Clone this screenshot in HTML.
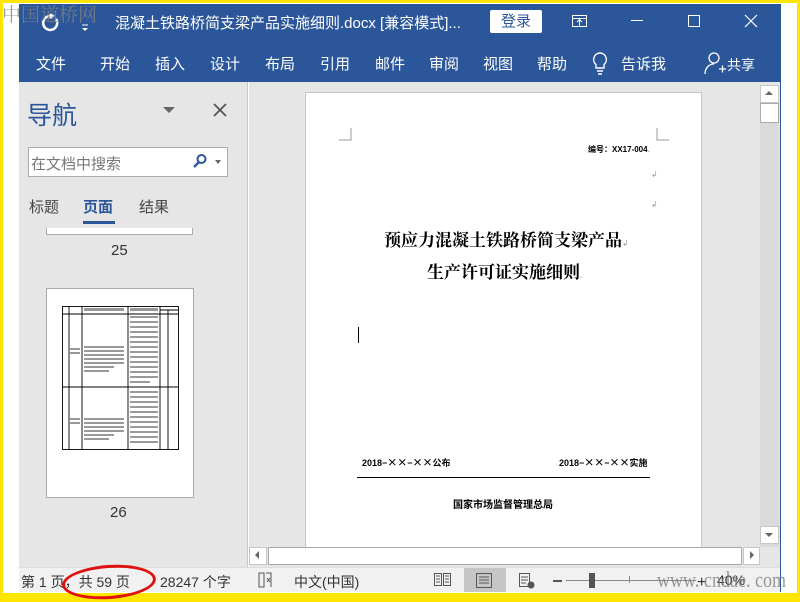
<!DOCTYPE html>
<html><head><meta charset="utf-8"><style>
*{margin:0;padding:0;box-sizing:border-box}
body{width:800px;height:600px;overflow:hidden;background:#ffe600;position:relative;font-family:"Liberation Sans","Noto Sans CJK SC",sans-serif}
.a{position:absolute}
.w{color:#fff;font-size:15px;white-space:nowrap}
.sr{font-family:"Liberation Serif","Noto Serif CJK SC",serif}
</style></head><body>
<div class="a" style="left:3px;top:3px;width:794px;height:590px;background:#fff"></div>
<!-- title bar -->
<div class="a" style="left:19px;top:4px;width:762px;height:78px;background:#2b579a"></div>
<svg class="a" style="left:38px;top:10px" width="60" height="24"><path d="M13 6 A7 7 0 1 0 18 9" stroke="#fff" stroke-width="2.5" fill="none"/><path d="M12 3 L17 6 L12 9Z" fill="#fff"/><path d="M44 15h6" stroke="#fff"/><path d="M44 18l3 3 3-3z" fill="#fff"/></svg>
<div class="a w" style="left:115px;top:12px;font-size:15px">混凝土铁路桥简支梁产品实施细则.docx [兼容模式]...</div>
<div class="a" style="left:490px;top:10px;width:52px;height:23px;background:#fff;border-radius:2px;color:#2b579a;font-size:15px;text-align:center;line-height:23px">登录</div>
<svg class="a" style="left:570px;top:12px" width="140" height="20"><rect x="2.5" y="3.5" width="14" height="11" fill="none" stroke="#fff"/><path d="M2.5 6.5h14M9.5 14V8M7 10l2.5-2.5L12 10" stroke="#fff" fill="none"/><path d="M61 8.5h12" stroke="#fff"/><rect x="118.5" y="3.5" width="11" height="11" fill="none" stroke="#fff"/></svg>
<svg class="a" style="left:744px;top:14px" width="14" height="14"><path d="M1 1L13 13M13 1L1 13" stroke="#fff" stroke-width="1.2"/></svg>
<!-- tabs -->
<div class="a w" style="left:36px;top:53px">文件</div>
<div class="a w" style="left:100px;top:53px">开始</div>
<div class="a w" style="left:155px;top:53px">插入</div>
<div class="a w" style="left:210px;top:53px">设计</div>
<div class="a w" style="left:265px;top:53px">布局</div>
<div class="a w" style="left:320px;top:53px">引用</div>
<div class="a w" style="left:375px;top:53px">邮件</div>
<div class="a w" style="left:429px;top:53px">审阅</div>
<div class="a w" style="left:483px;top:53px">视图</div>
<div class="a w" style="left:537px;top:53px">帮助</div>
<svg class="a" style="left:590px;top:51px" width="20" height="26"><path d="M10 2a6.5 6.5 0 0 0-4 11.5V17h8v-3.5A6.5 6.5 0 0 0 10 2z" fill="none" stroke="#fff" stroke-width="1.4"/><path d="M7 20h6M8 23h4" stroke="#fff" stroke-width="1.4"/></svg>
<div class="a w" style="left:621px;top:53px">告诉我</div>
<svg class="a" style="left:703px;top:50px" width="24" height="28"><circle cx="11" cy="8" r="5" fill="none" stroke="#fff" stroke-width="1.3"/><path d="M2 24c0-6 4-10 9-10" fill="none" stroke="#fff" stroke-width="1.3"/><path d="M16 19h7M19.5 15.5v7" stroke="#fff" stroke-width="1.3"/></svg>
<div class="a w" style="left:727px;top:55px;font-size:14px">共享</div>
<!-- nav pane -->
<div class="a" style="left:19px;top:82px;width:229px;height:486px;background:#e6e6e6;border-right:1px solid #c8c8c8"></div>
<div class="a" style="left:27px;top:96px;font-size:25px;color:#2b579a">导航</div>
<div class="a" style="left:163px;top:107px;width:0;height:0;border-left:6px solid transparent;border-right:6px solid transparent;border-top:6px solid #666"></div>
<svg class="a" style="left:213px;top:103px" width="14" height="14"><path d="M1 1L13 13M13 1L1 13" stroke="#555" stroke-width="1.8"/></svg>
<div class="a" style="left:28px;top:147px;width:200px;height:30px;background:#fff;border:1px solid #ababab"></div>
<div class="a" style="left:31px;top:153px;font-size:15px;color:#777">在文档中搜索</div>
<svg class="a" style="left:192px;top:153px" width="16" height="16"><circle cx="9.5" cy="6" r="4" fill="none" stroke="#2b579a" stroke-width="2"/><path d="M7 9L2 14" stroke="#2b579a" stroke-width="2.4"/></svg>
<div class="a" style="left:215px;top:160px;border-left:3.5px solid transparent;border-right:3.5px solid transparent;border-top:4px solid #666"></div>
<div class="a" style="left:29px;top:196px;font-size:15px;color:#444">标题</div>
<div class="a" style="left:83px;top:196px;font-size:15px;color:#2b579a;font-weight:bold">页面</div>
<div class="a" style="left:139px;top:196px;font-size:15px;color:#444">结果</div>
<div class="a" style="left:83px;top:221px;width:32px;height:3px;background:#2b579a"></div>
<div class="a" style="left:46px;top:228px;width:147px;height:7px;background:#fff;border:1px solid #aaa;border-top:none"></div>
<div class="a" style="left:111px;top:242px;font-size:15px;color:#333">25</div>
<div class="a" style="left:46px;top:288px;width:148px;height:210px;background:#fff;border:1px solid #aaa"></div>
<svg class="a" style="left:46px;top:288px" width="148" height="210">
<g stroke="#000" fill="none" stroke-width="0.9"><rect x="16.5" y="18.5" width="116" height="143"/><path d="M23 18v143M36 18v143M82 18v143M114 18v143M122 22v139M16 26h116M16 99h116M114 22h18"/></g>
<g fill="#999"><rect x="38" y="58" width="40" height="2"/><rect x="38" y="62" width="40" height="2"/><rect x="38" y="66" width="40" height="2"/><rect x="38" y="70" width="40" height="2"/><rect x="38" y="74" width="40" height="2"/><rect x="38" y="78" width="30" height="2"/><rect x="38" y="82" width="25" height="2"/><rect x="84" y="28" width="28" height="2"/><rect x="84" y="33" width="28" height="2"/><rect x="84" y="38" width="28" height="2"/><rect x="84" y="43" width="28" height="2"/><rect x="84" y="48" width="28" height="2"/><rect x="84" y="53" width="28" height="2"/><rect x="84" y="58" width="28" height="2"/><rect x="84" y="63" width="28" height="2"/><rect x="84" y="68" width="28" height="2"/><rect x="84" y="73" width="28" height="2"/><rect x="84" y="78" width="28" height="2"/><rect x="84" y="83" width="28" height="2"/><rect x="84" y="88" width="28" height="2"/><rect x="84" y="93" width="20" height="2"/><rect x="24" y="60" width="10" height="2"/><rect x="24" y="64" width="10" height="2"/><rect x="38" y="130" width="40" height="2"/><rect x="38" y="134" width="40" height="2"/><rect x="38" y="138" width="40" height="2"/><rect x="38" y="142" width="40" height="2"/><rect x="38" y="146" width="30" height="2"/><rect x="38" y="150" width="25" height="2"/><rect x="84" y="103" width="28" height="2"/><rect x="84" y="108" width="28" height="2"/><rect x="84" y="113" width="28" height="2"/><rect x="84" y="118" width="28" height="2"/><rect x="84" y="123" width="28" height="2"/><rect x="84" y="128" width="28" height="2"/><rect x="84" y="133" width="28" height="2"/><rect x="84" y="138" width="28" height="2"/><rect x="84" y="143" width="28" height="2"/><rect x="84" y="148" width="28" height="2"/><rect x="84" y="153" width="28" height="2"/><rect x="24" y="130" width="10" height="2"/><rect x="24" y="134" width="10" height="2"/><rect x="38" y="20" width="40" height="3"/><rect x="84" y="20" width="28" height="3"/></g></svg>
<div class="a" style="left:110px;top:504px;font-size:15px;color:#333">26</div>
<!-- doc area -->
<div class="a" style="left:249px;top:82px;width:531px;height:486px;background:#e6e6e6"></div>
<div class="a" style="left:305px;top:92px;width:397px;height:455px;background:#fff;border:1px solid #c6c6c6;border-bottom:none"></div>
<svg class="a" style="left:330px;top:120px" width="350" height="40"><path d="M21 8v12h-12M327 8v12h12" stroke="#999" fill="none"/></svg>
<div class="a" style="left:588px;top:144px;font-size:8px;color:#000;font-weight:bold;white-space:nowrap">编号：XX17-004<span style="color:#aaa">.</span></div>
<div class="a" style="left:651px;top:170px;font-size:8px;color:#999">↲</div>
<div class="a" style="left:651px;top:200px;font-size:8px;color:#999">↲</div>
<div class="a sr" style="left:384px;top:226px;font-size:17px;color:#000;font-weight:bold;white-space:nowrap">预应力混凝土铁路桥简支梁产品<span style="font-size:8px;color:#999;font-weight:normal">↲</span></div>
<div class="a sr" style="left:427px;top:258px;font-size:17px;color:#000;font-weight:bold;white-space:nowrap">生产许可证实施细则<span style="font-size:8px;color:#999">.</span></div>
<div class="a" style="left:358px;top:327px;width:1px;height:16px;background:#000"></div>
<div class="a" style="left:362px;top:454px;font-size:9px;font-weight:bold;color:#000;white-space:nowrap">2018−<span style="font-family:'Noto Sans CJK SC';font-size:10px">××</span>−<span style="font-family:'Noto Sans CJK SC';font-size:10px">××</span>公布</div>
<div class="a" style="left:559px;top:454px;font-size:9px;font-weight:bold;color:#000;white-space:nowrap">2018−<span style="font-family:'Noto Sans CJK SC';font-size:10px">××</span>−<span style="font-family:'Noto Sans CJK SC';font-size:10px">××</span>实施</div>
<div class="a" style="left:357px;top:477px;width:293px;height:1px;background:#000"></div>
<div class="a" style="left:453px;top:496px;font-size:10px;font-weight:bold;color:#000;white-space:nowrap">国家市场监督管理总局</div>
<!-- scrollbars -->
<div class="a" style="left:760px;top:85px;width:19px;height:462px;background:#dadada"></div>
<div class="a" style="left:760px;top:85px;width:19px;height:18px;background:#fff;border:1px solid #c6c6c6"></div>
<div class="a" style="left:765px;top:91px;border-left:4px solid transparent;border-right:4px solid transparent;border-bottom:4px solid #666"></div>
<div class="a" style="left:760px;top:103px;width:19px;height:20px;background:#fff;border:1px solid #aaa"></div>
<div class="a" style="left:760px;top:526px;width:19px;height:18px;background:#fff;border:1px solid #c6c6c6"></div>
<div class="a" style="left:765px;top:533px;border-left:4px solid transparent;border-right:4px solid transparent;border-top:4px solid #666"></div>
<div class="a" style="left:249px;top:547px;width:531px;height:19px;background:#e6e6e6"></div>
<div class="a" style="left:249px;top:547px;width:18px;height:18px;background:#fff;border:1px solid #c6c6c6"></div>
<div class="a" style="left:255px;top:551px;border-top:4px solid transparent;border-bottom:4px solid transparent;border-right:4px solid #666"></div>
<div class="a" style="left:268px;top:547px;width:474px;height:18px;background:#fff;border:1px solid #aaa"></div>
<div class="a" style="left:743px;top:547px;width:17px;height:18px;background:#fff;border:1px solid #c6c6c6"></div>
<div class="a" style="left:750px;top:551px;border-top:4px solid transparent;border-bottom:4px solid transparent;border-left:4px solid #666"></div>
<div class="a" style="left:780px;top:82px;width:1px;height:510px;background:#2b579a"></div>
<!-- status bar -->
<div class="a" style="left:19px;top:567px;width:761px;height:25px;background:#f1f1f1;border-top:1px solid #ddd"></div>
<div class="a" style="left:21px;top:572px;font-size:14px;color:#333;white-space:nowrap">第 1 页，共 59 页</div>
<div class="a" style="left:160px;top:572px;font-size:14px;color:#333;white-space:nowrap">28247 个字</div>
<div class="a" style="left:62px;top:565px;width:94px;height:34px;border:3px solid #e01010;border-radius:50%;transform:rotate(-4deg)"></div>
<svg class="a" style="left:257px;top:572px" width="16" height="16"><path d="M2 1h5v14H2zM9 1h5v14" fill="none" stroke="#555"/><path d="M10 6l3 4M13 6l-3 4" stroke="#555"/></svg>
<div class="a" style="left:294px;top:572px;font-size:14px;color:#333">中文(中国)</div>
<svg class="a" style="left:433px;top:572px" width="20" height="16"><path d="M1.5 1.5h7v12h-7zM10.5 1.5h7v12h-7zM3 4h4M3 7h4M3 10h4M12 4h4M12 7h4M12 10h4" stroke="#555" fill="none"/></svg>
<div class="a" style="left:464px;top:568px;width:42px;height:24px;background:#c6c6c6"></div>
<svg class="a" style="left:475px;top:572px" width="20" height="17"><path d="M1.5 1.5h15v14h-15zM4 5h10M4 8h10M4 11h10" stroke="#555" fill="none"/></svg>
<svg class="a" style="left:518px;top:572px" width="20" height="18"><path d="M1.5 1.5h10v13h-10zM3 5h7M3 8h7M3 11h5" stroke="#555" fill="none"/><circle cx="13" cy="13" r="3.5" fill="#555"/></svg>
<div class="a" style="left:553px;top:580px;width:9px;height:2px;background:#555"></div>
<div class="a" style="left:566px;top:580px;width:130px;height:1px;background:#888"></div>
<div class="a" style="left:589px;top:573px;width:6px;height:15px;background:#555"></div>
<div class="a" style="left:629px;top:576px;width:1px;height:7px;background:#888"></div>
<div class="a" style="left:697px;top:574px;font-size:16px;color:#333">+</div>
<div class="a" style="left:717px;top:572px;font-size:14px;color:#333">40%</div>
<div class="a sr" style="left:657px;top:567px;font-size:22px;color:rgba(120,120,120,0.75);white-space:nowrap;transform:scaleX(0.82);transform-origin:left top">www. cndae. com</div>
<div class="a" style="left:2px;top:0px;font-size:19px;color:rgba(130,130,130,0.8);letter-spacing:0px;font-family:'Liberation Serif','Noto Serif CJK SC',serif">中国道桥网</div>
</body></html>
